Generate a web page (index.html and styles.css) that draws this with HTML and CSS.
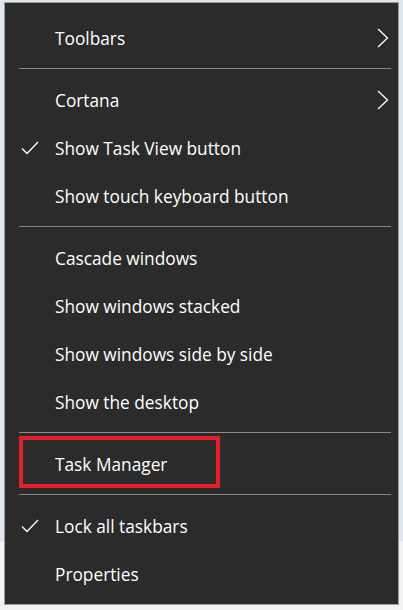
FILE: index.html
```html
<!DOCTYPE html>
<html>
<head>
<meta charset="utf-8">
<link rel="stylesheet" href="styles.css">
</head>
<body>
<div class="menu">
  <div class="item"><span class="label">Toolbars</span>
    <svg class="chev" width="12" height="20" viewBox="0 0 12 20"><path d="M1 1 L10.5 10 L1 19" fill="none" stroke="#fff" stroke-width="1.3"/></svg>
  </div>
  <div class="sep"></div>
  <div class="item"><span class="label">Cortana</span>
    <svg class="chev" width="12" height="20" viewBox="0 0 12 20"><path d="M1 1 L10.5 10 L1 19" fill="none" stroke="#fff" stroke-width="1.3"/></svg>
  </div>
  <div class="item">
    <svg class="check" width="18" height="14" viewBox="0 0 18 14"><path d="M1 7.5 L6 12.5 L17 1" fill="none" stroke="#fff" stroke-width="1.3"/></svg>
    <span class="label">Show Task View button</span></div>
  <div class="item"><span class="label">Show touch keyboard button</span></div>
  <div class="sep"></div>
  <div class="item"><span class="label">Cascade windows</span></div>
  <div class="item"><span class="label">Show windows stacked</span></div>
  <div class="item"><span class="label">Show windows side by side</span></div>
  <div class="item"><span class="label">Show the desktop</span></div>
  <div class="sep"></div>
  <div class="item highlight"><span class="label">Task Manager</span><div class="redbox"></div></div>
  <div class="sep"></div>
  <div class="item">
    <svg class="check" width="18" height="14" viewBox="0 0 18 14"><path d="M1 7.5 L6 12.5 L17 1" fill="none" stroke="#fff" stroke-width="1.3"/></svg>
    <span class="label">Lock all taskbars</span></div>
  <div class="item"><span class="label">Properties</span></div>
</div>
</body>
</html>
```
FILE: styles.css
```css
html, body {
  margin: 0;
  padding: 0;
}
body {
  width: 403px;
  height: 610px;
  overflow: hidden;
  background: linear-gradient(to bottom, #dfe6ee 0, #dfe6ee 541px, #f2f2f2 541px);
  font-family: "Open Sans", "Noto Sans", sans-serif;
}
.menu {
  position: relative;
  margin: 2px 2px 0 4px;
  width: 395px;
  height: 603px;
  box-sizing: border-box;
  border: 1px solid #9a9a9a;
  background: #2b2b2b;
  padding-top: 11px;
}
.item {
  position: relative;
  height: 48px;
  display: flex;
  align-items: center;
  color: #ffffff;
  font-size: 17.3px;
}
.label {
  margin-left: 50px;
  letter-spacing: 0;
}
.chev {
  position: absolute;
  left: 372px;
  top: 14px;
}
.check {
  position: absolute;
  left: 16px;
  top: 17px;
}
.sep {
  height: 14px;
  display: flex;
  align-items: center;
  padding: 0 7px 0 14px;
}
.sep::before {
  content: "";
  display: block;
  width: 100%;
  height: 1px;
  background: #8a8a8a;
  margin-top: -1px;
}
.redbox {
  position: absolute;
  left: 14px;
  top: -4px;
  width: 201px;
  height: 52px;
  box-sizing: border-box;
  border: 4px solid #e0202a;
}
```
